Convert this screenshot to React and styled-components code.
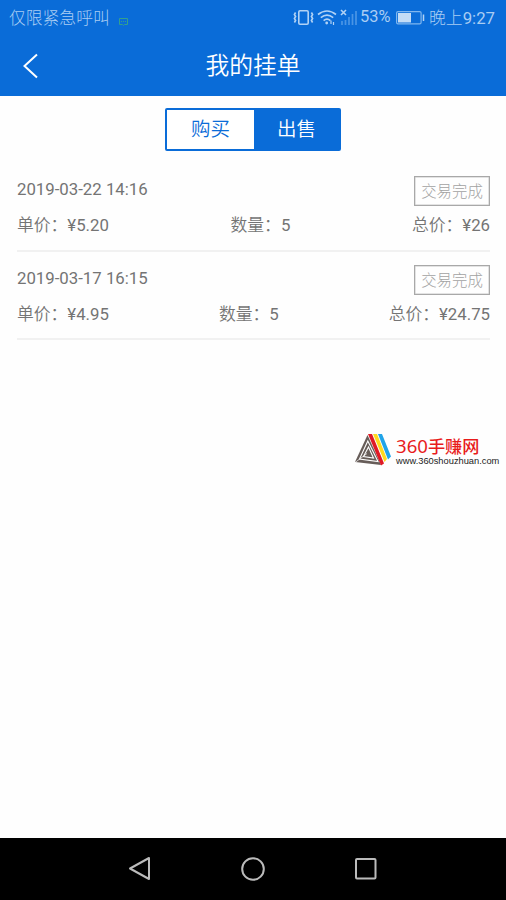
import React from 'react'
import styled, { createGlobalStyle } from 'styled-components'

const orders = [
  { id: 1, time: '2019-03-22 14:16', price: '¥5.20', amount: '5', total: '¥26', status: '交易完成' },
  { id: 2, time: '2019-03-17 16:15', price: '¥4.95', amount: '5', total: '¥24.75', status: '交易完成' },
]

const GlobalStyle = createGlobalStyle`
  * { box-sizing: border-box; }
  body {
    margin: 0;
    background: #fff;
    font-family: Roboto, 'Noto Sans CJK SC', sans-serif;
    font-weight: 350;
  }
`

const Page = styled.div`
  position: relative;
  display: flex;
  flex-direction: column;
  height: 900px;
  background: #fefefe;
  overflow: hidden;
`

const StatusBar = styled.div`
  display: flex;
  align-items: center;
  justify-content: space-between;
  height: 35px;
  padding: 0 11px 0 9px;
  background: #0a6cd8;
  color: #a9cdf3;
  font-size: 16.8px;
  font-weight: 300;
  line-height: 34px;
  white-space: nowrap;
`

const Carrier = styled.div`
  display: flex;
  align-items: center;
  gap: 9px;

  svg { margin-top: 8px; }
`

const Indicators = styled.div`
  display: flex;
  align-items: center;
`

const Icons = styled.div`
  display: flex;
  gap: 3px;
`

const Battery = styled.span`
  width: 31px;
  margin: -2px 5px 0 3px;
  font-size: 16.4px;
  font-weight: 400;
`

const Latin = styled.span`
  font-weight: 400;
`

const Clock = styled.span`
  margin-left: 4px;
`

const Header = styled.header`
  display: grid;
  grid-template-columns: 60px 1fr 60px;
  align-items: center;
  height: 61px;
  background: #0a6cd8;
  color: #fff;

  svg { margin: -2px 0 0 22px; }
`

const Title = styled.h1`
  margin: 0;
  font-size: 23.8px;
  font-weight: 350;
  line-height: 63px;
  text-align: center;
`

const Tabs = styled.div`
  display: flex;
  width: 176px;
  height: 43px;
  margin: 12px auto 0 165px;
  border: 2px solid #0a6cd8;
  border-radius: 2px;
`

const Tab = styled.button`
  width: ${({ $active }) => ($active ? '85px' : '87px')};
  padding: 0;
  border: 0;
  background: ${({ $active }) => ($active ? '#0a6cd8' : '#fff')};
  color: ${({ $active }) => ($active ? '#fff' : '#0a6cd8')};
  font: inherit;
  font-size: 19.5px;
  line-height: 36px;
`

const List = styled.ul`
  flex: 1;
  margin: 12px 16px 0 17px;
  padding: 0;
  list-style: none;
`

const Order = styled.li`
  height: 88.5px;
  padding-top: 13px;
  border-bottom: 2px solid #f1f1f1;
  color: #747474;
  font-size: 16.8px;
`

const OrderTop = styled.div`
  display: flex;
  justify-content: space-between;
  height: 30px;
  line-height: 27px;
`

const Status = styled.span`
  width: 76px;
  height: 30px;
  border: 1px solid #a8a8a8;
  box-shadow: inset 0 0 0 0.5px #c8c8c8;
  color: #a2a2a2;
  font-size: 15.4px;
  font-weight: 300;
  line-height: 31px;
  text-align: center;
`

const Details = styled.div`
  display: flex;
  justify-content: space-between;
  margin-top: 5px;
  line-height: 29px;
`

const Watermark = styled.div`
  position: absolute;
  left: 354px;
  top: 433px;
  display: flex;
  gap: 5px;
`

const Brand = styled.div`
  padding-top: 2px;
  color: #e81c1c;
  font-family: 'Noto Sans', 'Noto Sans CJK SC', sans-serif;
  font-size: 17.2px;
  font-weight: 500;
  line-height: 22px;
  white-space: nowrap;
`

const BrandNumber = styled.span`
  font-size: 18.6px;
  font-weight: 400;
`

const Site = styled.div`
  color: #222;
  font-family: 'Liberation Sans', sans-serif;
  font-size: 9.3px;
  line-height: 6px;
`

const NavBar = styled.nav`
  display: flex;
  align-items: center;
  justify-content: center;
  gap: 88px;
  height: 62px;
  background: #000;
`

const CarrierIcon = () => (
  <svg width="9" height="8" viewBox="0 0 9 8" fill="none" stroke="#35a08c">
    <path d="M.5 .5h8v6h-3l-1 1-1-1h-3zM2 3.5h1m1 0h1m1 0h1" />
  </svg>
)

const VibrateIcon = () => (
  <svg width="21" height="17" viewBox="0 0 21 17" fill="none" stroke="#b1d2f5">
    <rect x="5.8" y="1.8" width="9.4" height="13.4" rx="1.2" strokeWidth="1.6" />
    <path d="M2.6 3.5l-1.2 2 1.2 2-1.2 2 1.2 2-1.2 2M18.4 3.5l1.2 2-1.2 2 1.2 2-1.2 2 1.2 2" strokeWidth="1.6" />
  </svg>
)

const WifiIcon = () => (
  <svg width="20" height="17" viewBox="0 0 20 17" fill="none" stroke="#b1d2f5" strokeWidth="1.6">
    <path d="M1 5.5Q10-1.6 19 5.5M3.8 8.7Q10 3.6 16.2 8.7M6.6 11.6Q10 8.6 13.4 11.6" />
    <circle cx="9.7" cy="14" r="1.4" fill="#b1d2f5" stroke="none" />
    <path d="M14 11.5v3.500m2.500-2v3" strokeWidth="1.2" />
  </svg>
)

const SignalIcon = () => (
  <svg width="17" height="17" viewBox="0 0 17 17" fill="none">
    <path d="M1 1l5 5m0-5l-5 5" stroke="#b1d2f5" strokeWidth="1.6" />
    <path d="M2 16v-4M5.5 16v-5M9 16V8M12.5 16V5M16 16V2" stroke="#4a95e5" strokeWidth="1.7" />
  </svg>
)

const BatteryIcon = () => (
  <svg width="29" height="14" viewBox="0 0 29 14" fill="none">
    <rect x=".6" y=".6" width="24.5" height="12.3" rx="1.4" stroke="#7fb6ee" strokeWidth="1.2" />
    <rect x="2" y="2" width="13" height="9.5" fill="#c3dcf6" />
    <path d="M27.5 3.5v6.5" stroke="#b1d2f5" strokeWidth="1.5" />
  </svg>
)

const BrandLogo = () => (
  <svg width="37" height="34" viewBox="0 0 37 34">
    <path d="M13.500 2L27 32 1 29z" fill="#675d59" />
    <path d="M13.800 8L5.500 26 24 28.500zM14.500 14L9.500 23.600 19.500 25z" fill="none" stroke="#fefefe" strokeWidth="1.1" />
    <path d="M1 29.500L13 20.500" stroke="#fefefe" strokeWidth=".7" />
    <path d="M14 1h4l12 29.500-3 2z" fill="#e01a26" />
    <path d="M19 1h4l10 25-2.500 3z" fill="#ffd91e" />
    <path d="M24 1h4l9 22.500-3 3z" fill="#21a4e8" />
  </svg>
)

const App = () => {
  return (
    <Page>
      <GlobalStyle />
      <StatusBar>
        <Carrier>仅限紧急呼叫<CarrierIcon /></Carrier>
        <Indicators>
          <Icons>
            <VibrateIcon />
            <WifiIcon />
            <SignalIcon />
          </Icons>
          <Battery>53%</Battery>
          <BatteryIcon />
          <Clock>晚上<Latin>9:27</Latin></Clock>
        </Indicators>
      </StatusBar>
      <Header>
        <svg width="17" height="26" viewBox="0 0 17 26" fill="none" stroke="#fff" strokeWidth="2">
          <path d="M15 1.5L2.5 13 15 24.5" />
        </svg>
        <Title>我的挂单</Title>
      </Header>
      <Tabs>
        <Tab>购买</Tab>
        <Tab $active>出售</Tab>
      </Tabs>
      <List>
        {orders.map(order => (
          <Order key={order.id}>
            <OrderTop>
              <Latin>{order.time}</Latin>
              <Status>{order.status}</Status>
            </OrderTop>
            <Details>
              <span>单价：<Latin>{order.price}</Latin></span>
              <span>数量：<Latin>{order.amount}</Latin></span>
              <span>总价：<Latin>{order.total}</Latin></span>
            </Details>
          </Order>
        ))}
      </List>
      <Watermark>
        <BrandLogo />
        <div>
          <Brand><BrandNumber>360</BrandNumber>手赚网</Brand>
          <Site>www.360shouzhuan.com</Site>
        </div>
      </Watermark>
      <NavBar>
        <svg width="24" height="26" viewBox="0 0 24 26" fill="none" stroke="#bbb" strokeWidth="2">
          <path d="M21 2v21L2 12.5z" strokeLinejoin="round" />
        </svg>
        <svg width="26" height="26" viewBox="0 0 26 26" fill="none" stroke="#bbb" strokeWidth="2">
          <circle cx="13" cy="13" r="10.8" />
        </svg>
        <svg width="24" height="24" viewBox="0 0 24 24" fill="none" stroke="#bbb" strokeWidth="2">
          <rect x="2" y="2" width="19.5" height="19.5" rx="1" />
        </svg>
      </NavBar>
    </Page>
  )
}

export default App
